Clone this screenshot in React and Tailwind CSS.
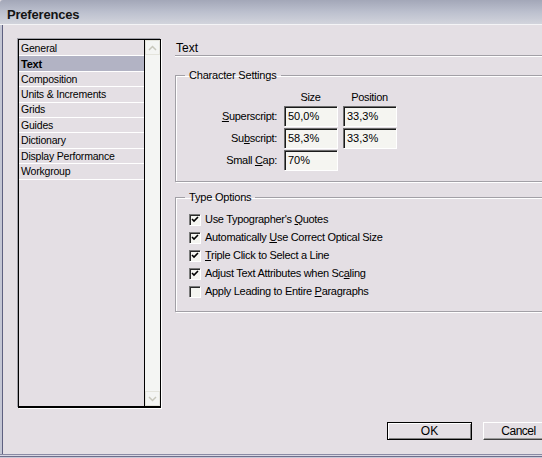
import React from 'react';

const items = [
  'General',
  'Text',
  'Composition',
  'Units & Increments',
  'Grids',
  'Guides',
  'Dictionary',
  'Display Performance',
  'Workgroup',
];

const U = ({ children }) => <span className="underline underline-offset-1">{children}</span>;

const Field = ({ value }) => (
  <div className="h-[20px] w-[53px] bg-[#f5f5f1] border-t border-l border-[#6e6e6e] shadow-[inset_1px_1px_0_#1a1a1a,1px_1px_0_#ffffff] pl-[3px] flex items-center text-[11px]">
    {value}
  </div>
);

const Check = ({ checked, children }) => (
  <div className="h-[18px] flex items-center pl-[13px]">
    <div className="w-[11px] h-[11px] bg-[#f5f5f1] border-t border-l border-[#7a7a7a] shadow-[inset_1px_1px_0_#2a2a2a,1px_1px_0_#ffffff] flex items-center justify-center">
      {checked && (
        <svg width="8" height="7" viewBox="0 0 8 7">
          <path d="M1 3 L3 5 L7 1" stroke="#000" strokeWidth="1.6" fill="none" />
        </svg>
      )}
    </div>
    <span className="ml-[5px] text-[11px] tracking-[-0.3px]">{children}</span>
  </div>
);

const Group = ({ label, children, className }) => (
  <fieldset className={`border border-[#a2a0a6] shadow-[inset_1px_1px_0_#ffffff,1px_1px_0_#ffffff] ${className}`}>
    <legend className="ml-[9px] px-[4px] text-[11px] leading-[13px] tracking-[-0.2px]">{label}</legend>
    {children}
  </fieldset>
);

const Label = ({ children }) => (
  <div className="pr-[1px] flex items-center justify-end tracking-[-0.3px]">
    <span>{children}</span>
  </div>
);

export default function App() {
  return (
    <div
      className="w-[542px] h-[458px] overflow-hidden flex flex-col bg-[#e4dfe4] text-black"
      style={{ fontFamily: '"Liberation Sans", Arial, sans-serif' }}
    >
      {/* title bar */}
      <div className="h-[24px] shrink-0 rounded-tl-[3px] bg-gradient-to-b from-[#a3a7b8] via-[#bcc0ce] to-[#d2d4dc] flex items-center pl-[7px] pt-[5px]">
        <span className="text-[13px] font-bold tracking-[-0.2px] text-[#141414]">Preferences</span>
      </div>
      <div className="h-[1px] shrink-0 bg-[#f4f4f6]" />

      {/* body */}
      <div className="flex-1 flex shadow-[inset_2px_0_0_#c4c6d4,inset_3px_0_0_#5e6080] pl-[18px] pt-[14px]">
        {/* list */}
        <div className="w-[143px] h-[369px] shrink-0 flex border border-black border-b-2 shadow-[-1px_-1px_0_#a0a0a8,1px_1px_0_#ffffff]">
          <div className="flex-1 border-r border-black pt-[1px]">
            {items.map((it) => (
              <div
                key={it}
                className={`h-[15.4px] border-b border-white flex items-center pl-[2px] pt-[1px] text-[10.5px] tracking-[-0.2px] ${
                  it === 'Text' ? 'bg-[#b2b3c4] font-bold text-[11px]' : ''
                }`}
              >
                {it}
              </div>
            ))}
          </div>
          <div className="w-[15px] bg-[#f4f5f3] flex flex-col justify-between">
            <div className="h-[15px] w-[15px] border border-[#e4e4dc] flex items-center justify-center">
              <svg width="9" height="6" viewBox="0 0 9 6">
                <path d="M1 5 L4.5 1.5 L8 5" stroke="#c8c8bc" strokeWidth="1.5" fill="none" />
              </svg>
            </div>
            <div className="h-[15px] w-[15px] border border-[#e4e4dc] flex items-center justify-center">
              <svg width="9" height="6" viewBox="0 0 9 6">
                <path d="M1 1 L4.5 4.5 L8 1" stroke="#c8c8bc" strokeWidth="1.5" fill="none" />
              </svg>
            </div>
          </div>
        </div>

        {/* right panel */}
        <div className="w-[400px] shrink-0 ml-[14px] flex flex-col">
          <div className="h-[17px] pt-[2px] border-b border-[#a2a0a6] shadow-[0_1px_0_#ffffff] pl-[1px] text-[12px] leading-[14px]">
            Text
          </div>

          <Group label="Character Settings" className="mt-[13px] pb-[11px]">
            <div className="grid grid-cols-[102px_53px_53px] gap-x-[6px] gap-y-[2px] mt-[9px] text-[11px]">
              <div />
              <div className="text-center leading-[13px] tracking-[-0.3px]">Size</div>
              <div className="text-center leading-[13px] tracking-[-0.3px]">Position</div>

              <Label>
                <U>S</U>uperscript:
              </Label>
              <Field value="50,0%" />
              <Field value="33,3%" />

              <Label>
                Su<U>b</U>script:
              </Label>
              <Field value="58,3%" />
              <Field value="33,3%" />

              <Label>
                Small <U>C</U>ap:
              </Label>
              <Field value="70%" />
            </div>
          </Group>

          <Group label="Type Options" className="mt-[9px] pb-[11px]">
            <div className="mt-[6px]">
              <Check checked>
                Use Typographer's <U>Q</U>uotes
              </Check>
              <Check checked>
                Automatically <U>U</U>se Correct Optical Size
              </Check>
              <Check checked>
                <U>T</U>riple Click to Select a Line
              </Check>
              <Check checked>
                Adjust Text Attributes when Sc<U>a</U>ling
              </Check>
              <Check>
                Apply Leading to Entire <U>P</U>aragraphs
              </Check>
            </div>
          </Group>

          <div className="mt-auto mb-[14px] flex pl-[212px] gap-[11px]">
            <button className="w-[85px] h-[18px] bg-[#e4dfe4] border border-black shadow-[inset_1px_1px_0_#ffffff,inset_-1px_-1px_0_#808080] text-[12px] leading-none">
              OK
            </button>
            <button className="w-[85px] h-[18px] bg-[#e4dfe4] border-t border-l border-white border-b border-r border-b-[#404040] border-r-[#404040] shadow-[inset_-1px_-1px_0_#9a9a9a] text-[12px] leading-none tracking-[-0.5px] pr-[14px]">
              Cancel
            </button>
          </div>
        </div>
      </div>

      {/* bottom frame */}
      <div className="h-[1px] shrink-0 bg-[#8a8aa4]" />
      <div className="h-[1px] shrink-0 bg-[#d8d8e2]" />
      <div className="h-[1px] shrink-0 bg-[#6e6e8c]" />
      <div className="h-[1px] shrink-0 bg-[#c8c8d6]" />
    </div>
  );
}
